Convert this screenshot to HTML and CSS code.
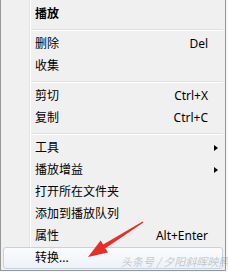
FILE: index.html
```html
<!DOCTYPE html>
<html>
<head>
<meta charset="utf-8">
<link rel="stylesheet" href="styles.css">
</head>
<body>
<div class="menu">
  <div class="item bold"><span class="label">播放</span></div>
  <div class="sep"></div>
  <div class="item"><span class="label">删除</span><span class="key">Del</span><span class="sub"></span></div>
  <div class="item"><span class="label">收集</span></div>
  <div class="sep"></div>
  <div class="item"><span class="label">剪切</span><span class="key">Ctrl+X</span><span class="sub"></span></div>
  <div class="item"><span class="label">复制</span><span class="key">Ctrl+C</span><span class="sub"></span></div>
  <div class="sep"></div>
  <div class="item"><span class="label">工具</span><span class="sub"><i class="tri"></i></span></div>
  <div class="item"><span class="label">播放增益</span><span class="sub"><i class="tri"></i></span></div>
  <div class="item"><span class="label">打开所在文件夹</span></div>
  <div class="item"><span class="label">添加到播放队列</span></div>
  <div class="item"><span class="label">属性</span><span class="key">Alt+Enter</span><span class="sub"></span></div>
  <div class="item hover"><span class="label">转换...</span></div>
</div>
<div class="watermark">头条号 / 夕阳斜晖映照</div>
<svg class="arrow" width="228" height="272" viewBox="0 0 228 272">
  <polygon fill="#e5302a" points="88,257 108,252.5 105.3,248.3 143.5,222.6 142.6,221.4 103.2,244.6 100.6,240.4"/>
</svg>
</body>
</html>
```
FILE: styles.css
```css
html, body {
  margin: 0;
  padding: 0;
}
body {
  width: 228px;
  height: 272px;
  background: #f7f7f7;
  position: relative;
  overflow: hidden;
  font-family: "Noto Sans", "Noto Sans CJK SC", sans-serif;
  font-size: 12px;
  color: #000;
}
.menu {
  width: 224px;
  border-left: 1px solid #979797;
  border-right: 1px solid #979797;
  border-bottom: 1px solid #979797;
  padding: 3px 0 1px 0;
  display: flex;
  flex-direction: column;
  background: linear-gradient(to right, #f0f0f0 0, #f0f0f0 28px, #e2e3e3 28px, #e2e3e3 29px, #ffffff 29px, #ffffff 30px, #f0f0f0 30px);
}
.item {
  display: flex;
  align-items: center;
  height: 20px;
  margin: 0 2px;
  border: 1px solid transparent;
  border-radius: 3px;
  line-height: 20px;
}
.item.bold .label {
  font-weight: bold;
}
.label {
  flex: 1;
  padding-left: 31px;
  white-space: nowrap;
}
.key {
  white-space: nowrap;
}
.sub {
  width: 14px;
  height: 20px;
  display: flex;
  align-items: center;
  justify-content: center;
}
.tri {
  display: block;
  width: 0;
  height: 0;
  border-top: 3.5px solid transparent;
  border-bottom: 3.5px solid transparent;
  border-left: 4px solid #000;
  margin-left: 1px;
}
.item.hover {
  border-color: #c3d3e6;
  background: linear-gradient(to bottom, #fbfcfe, #edf2f8);
}
.sep {
  height: 8px;
  margin: 0 2px 0 30px;
  background: linear-gradient(to bottom, transparent 4px, #e0e0e0 4px, #e0e0e0 5px, #ffffff 5px, #ffffff 6px, transparent 6px);
}
.watermark {
  position: absolute;
  left: 121px;
  top: 254px;
  font-size: 11px;
  line-height: 15px;
  color: rgba(150, 150, 150, 0.5);
  white-space: nowrap;
  font-style: italic;
  font-family: "Noto Sans CJK SC", sans-serif;
}
.arrow {
  position: absolute;
  left: 0;
  top: 0;
}
```
